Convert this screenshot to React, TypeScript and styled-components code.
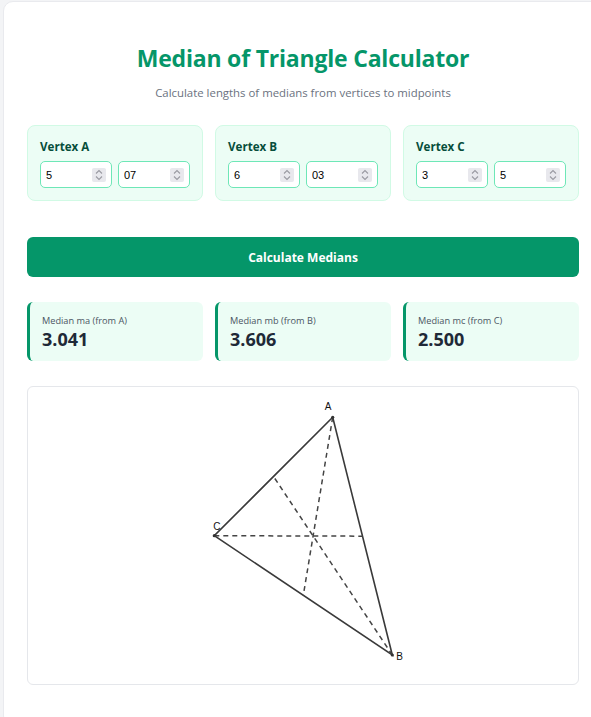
import React from "react";
import styled, { createGlobalStyle } from "styled-components";

const Global = createGlobalStyle`
  html, body { margin: 0; padding: 0; }
  body {
    background: #f3f4f6;
    overflow: hidden;
    font-family: "Open Sans", "Noto Sans", Arial, sans-serif;
  }
  * { box-sizing: border-box; }
`;

const Page = styled.div`
  padding: 1px 0 0 3px;
  width: 640px;
`;

const Card = styled.div`
  width: 600px;
  background: #ffffff;
  border: 1px solid #e9eaee;
  border-radius: 10px;
  padding: 41px 23px 40px;
`;

const Title = styled.h1`
  margin: 0;
  text-align: center;
  color: #059669;
  font-size: 23px;
  letter-spacing: -0.2px;
  line-height: 31px;
  font-weight: 700;
`;

const Subtitle = styled.p`
  margin: 10px 0 0;
  text-align: center;
  color: #6b7280;
  font-size: 11.4px;
  line-height: 18px;
`;

const VertexGrid = styled.div`
  display: grid;
  grid-template-columns: repeat(3, minmax(0, 1fr));
  gap: 12px;
  margin-top: 23px;
`;

const VertexCard = styled.div`
  min-width: 0;
  background: #ecfdf5;
  border: 1px solid #d1fae5;
  border-radius: 8px;
  padding: 12px;
`;

const VertexLabel = styled.div`
  font-size: 11.6px;
  line-height: 17px;
  font-weight: 700;
  color: #064e3b;
`;

const InputRow = styled.div`
  display: flex;
  gap: 6px;
  margin-top: 6px;
`;

const InputBox = styled.label`
  flex: 1 1 0;
  min-width: 0;
  display: flex;
  align-items: center;
  height: 27px;
  border: 1.5px solid #6ee7b7;
  border-radius: 5px;
  background: #fff;
  padding: 0 5.5px 0 5px;
`;

const NumInput = styled.input`
  flex: 1 1 0;
  width: 100%;
  min-width: 0;
  height: 100%;
  border: none;
  background: transparent;
  padding: 0;
  font-family: "Liberation Sans", Arial, sans-serif;
  font-size: 11px;
  color: #000;
  outline: none;
  -moz-appearance: textfield;
  &::-webkit-inner-spin-button,
  &::-webkit-outer-spin-button {
    -webkit-appearance: none;
    margin: 0;
  }
`;

const Spinner = styled.span`
  flex: none;
  width: 14px;
  height: 14px;
  border-radius: 2px;
  background: #e8e8ed;
  display: flex;
  align-items: center;
  justify-content: center;
`;

const Button = styled.button`
  display: block;
  width: 100%;
  height: 40px;
  margin-top: 36px;
  border: none;
  border-radius: 6px;
  background: #059669;
  color: #ffffff;
  font-family: "Open Sans", "Noto Sans", Arial, sans-serif;
  font-size: 12px;
  font-weight: 700;
  cursor: pointer;
`;

const ResultGrid = styled.div`
  display: grid;
  grid-template-columns: repeat(3, minmax(0, 1fr));
  gap: 12px;
  margin-top: 25px;
`;

const ResultCard = styled.div`
  background: #ecfdf5;
  border-left: 3px solid #059669;
  border-radius: 6px;
  padding: 12px 12px 11px;
`;

const ResultLabel = styled.div`
  font-size: 9.2px;
  line-height: 14px;
  color: #4b5563;
`;

const ResultValue = styled.div`
  font-size: 18px;
  line-height: 22px;
  font-weight: 700;
  color: #1f2937;
`;

const CanvasBox = styled.div`
  margin-top: 25px;
  height: 299px;
  border: 1px solid #e5e7eb;
  border-radius: 6px;
  background: #fff;
  overflow: hidden;
`;

const Svg = styled.svg`
  display: block;
  width: 550px;
  height: 297px;
`;

const vertices = [
  { label: "Vertex A", x: "5", y: "07" },
  { label: "Vertex B", x: "6", y: "03" },
  { label: "Vertex C", x: "3", y: "5" },
];

const results = [
  { label: "Median ma (from A)", value: "3.041" },
  { label: "Median mb (from B)", value: "3.606" },
  { label: "Median mc (from C)", value: "2.500" },
];

const A = { x: 304.7, y: 30.3 };
const B = { x: 364.3, y: 268 };
const C = { x: 186.3, y: 148.7 };
const mid = (p: { x: number; y: number }, q: { x: number; y: number }) => ({
  x: (p.x + q.x) / 2,
  y: (p.y + q.y) / 2,
});

function SpinIcon() {
  return (
    <svg width="8" height="12" viewBox="0 0 8 12" fill="none" stroke="#9a9aa2" strokeWidth="1.1">
      <polyline points="1,4.5 4,1.5 7,4.5" />
      <polyline points="1,7.5 4,10.5 7,7.5" />
    </svg>
  );
}

function NumberField({ value }: { value: string }) {
  return (
    <InputBox>
      <NumInput type="number" defaultValue={value} />
      <Spinner>
        <SpinIcon />
      </Spinner>
    </InputBox>
  );
}

function Diagram() {
  const mBC = mid(B, C);
  const mAC = mid(A, C);
  const mAB = mid(A, B);
  const medians = [
    [A, mBC],
    [B, mAC],
    [C, mAB],
  ];
  return (
    <Svg viewBox="0 0 550 297">
      <polygon
        points={`${A.x},${A.y} ${B.x},${B.y} ${C.x},${C.y}`}
        fill="none"
        stroke="#3a3a3a"
        strokeWidth={1.6}
        strokeLinejoin="miter"
      />
      {medians.map(([p, q], i) => (
        <line
          key={i}
          x1={p.x}
          y1={p.y}
          x2={q.x}
          y2={q.y}
          stroke="#444"
          strokeWidth={1.5}
          strokeDasharray="5 4"
        />
      ))}
      {[A, B, C].map((p, i) => (
        <circle key={i} cx={p.x} cy={p.y} r={1.6} fill="#333" />
      ))}
      <g fontFamily='"Liberation Sans", Arial, sans-serif' fontSize="10" fill="#111">
        <text x={A.x - 8} y={A.y - 7}>A</text>
        <text x={B.x + 4} y={B.y + 5}>B</text>
        <text x={C.x - 1} y={C.y - 6}>C</text>
      </g>
    </Svg>
  );
}

export default function App() {
  return (
    <>
      <Global />
      <Page>
        <Card>
          <Title>Median of Triangle Calculator</Title>
          <Subtitle>Calculate lengths of medians from vertices to midpoints</Subtitle>
          <VertexGrid>
            {vertices.map((v) => (
              <VertexCard key={v.label}>
                <VertexLabel>{v.label}</VertexLabel>
                <InputRow>
                  <NumberField value={v.x} />
                  <NumberField value={v.y} />
                </InputRow>
              </VertexCard>
            ))}
          </VertexGrid>
          <Button>Calculate Medians</Button>
          <ResultGrid>
            {results.map((r) => (
              <ResultCard key={r.label}>
                <ResultLabel>{r.label}</ResultLabel>
                <ResultValue>{r.value}</ResultValue>
              </ResultCard>
            ))}
          </ResultGrid>
          <CanvasBox>
            <Diagram />
          </CanvasBox>
        </Card>
      </Page>
    </>
  );
}
